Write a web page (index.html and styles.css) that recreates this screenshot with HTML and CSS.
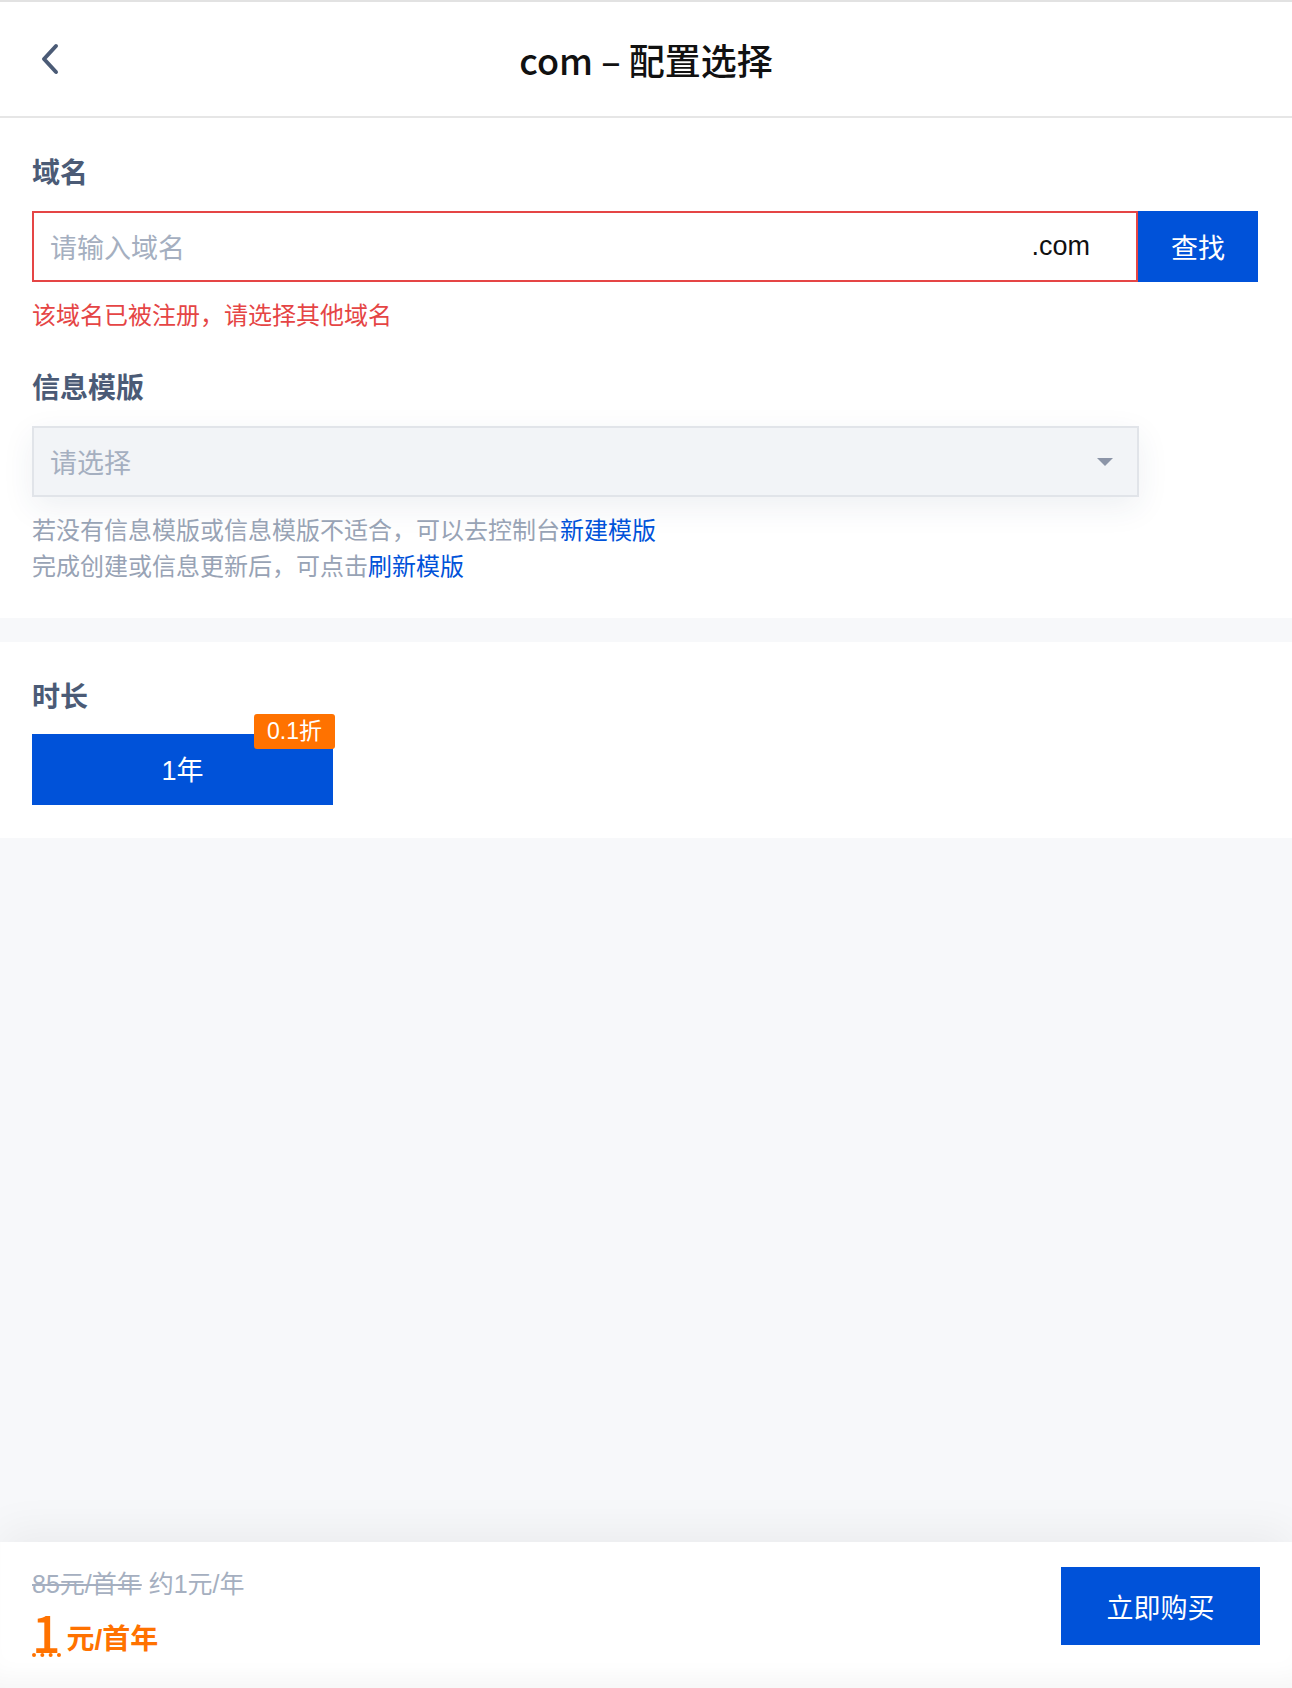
FILE: index.html
```html
<!DOCTYPE html>
<html lang="zh-CN">
<head>
    <meta charset="UTF-8">
    <meta name="viewport" content="width=device-width, initial-scale=1.0">
    <title>com - 配置选择</title>
    <link rel="stylesheet" href="styles.css">
</head>
<body>
<div class="page">

    <header class="topbar">
        <a class="back" href="#">
            <svg width="22" height="32" viewBox="0 0 22 32">
                <path d="M17 3 L5 16 L17 29" fill="none" stroke="#4b5b76" stroke-width="4" stroke-linecap="round" stroke-linejoin="round"/>
            </svg>
        </a>
        <h1 class="title">com – 配置选择</h1>
    </header>

    <!-- domain + template -->
    <section class="panel">
        <div class="label">域名</div>
        <div class="search-row">
            <div class="domain-input">
                <span class="placeholder">请输入域名</span>
                <span class="suffix">.com</span>
            </div>
            <button class="search-btn">查找</button>
        </div>
        <div class="error">该域名已被注册，请选择其他域名</div>

        <div class="label label-gap">信息模版</div>
        <div class="select">
            <span class="placeholder">请选择</span>
            <span class="caret"></span>
        </div>
        <p class="hint">
            若没有信息模版或信息模版不适合，可以去控制台<a href="#">新建模版</a><br>
            完成创建或信息更新后，可点击<a href="#">刷新模版</a>
        </p>
    </section>

    <!-- duration -->
    <section class="panel panel-second">
        <div class="label">时长</div>
        <div class="duration">
            <button class="year-btn">1年</button>
            <span class="badge">0.1折</span>
        </div>
    </section>

    <footer class="buybar">
        <div class="price">
            <div class="price-old"><s>85元/首年</s> 约1元/年</div>
            <div class="price-now"><span class="num">1</span><span class="unit">元/首年</span></div>
        </div>
        <button class="buy-btn">立即购买</button>
    </footer>

</div>
</body>
</html>
```

FILE: styles.css
```css
body {
    margin: 0;
    font-family: "Liberation Sans", "Noto Sans CJK SC", sans-serif;
    background-color: #f7f8fa;
    color: #000;
}

.page {
    display: flex;
    flex-direction: column;
    min-height: 100vh;
}

.topbar {
    display: flex;
    align-items: center;
    justify-content: center;
    position: relative;
    height: 114px;
    background: #fff;
    border-top: 2px solid #e2e2e2;
    border-bottom: 2px solid #e6e6e6;
}

.back {
    position: absolute;
    left: 39px;
    top: 41px;
    display: flex;
}

.title {
    margin: 0;
    font-family: "Noto Sans CJK SC", sans-serif;
    font-size: 36px;
    font-weight: 500;
    color: #111;
}

.panel {
    background: #fff;
    padding: 36px 34px 33px 32px;
}

.panel-second {
    margin-top: 24px;
    padding-top: 36px;
}

.label {
    font-size: 28px;
    line-height: 40px;
    font-weight: 700;
    color: #4b5b76;
}

.label-gap {
    margin-top: 36px;
}

.search-row {
    display: flex;
    margin-top: 17px;
    height: 71px;
}

.domain-input {
    flex: 1;
    display: flex;
    align-items: center;
    justify-content: space-between;
    border: 2px solid #e54545;
    padding: 0 46px 0 16px;
}

.placeholder {
    font-size: 27px;
    color: #a5afc0;
}

.suffix {
    font-size: 27px;
    color: #111;
}

.search-btn {
    width: 120px;
    border: none;
    background: #0052d9;
    color: #fff;
    font-family: inherit;
    font-size: 27px;
}

.error {
    margin-top: 17px;
    font-size: 24px;
    line-height: 34px;
    color: #e54545;
}

.select {
    display: flex;
    align-items: center;
    justify-content: space-between;
    box-sizing: border-box;
    width: 1107px;
    height: 71px;
    margin-top: 17px;
    padding: 0 24px 0 16px;
    background: #f2f4f7;
    border: 2px solid #e1e4e9;
    box-shadow: 0 10px 32px rgba(40, 60, 100, 0.08);
}

.caret {
    width: 0;
    height: 0;
    border-left: 8px solid transparent;
    border-right: 8px solid transparent;
    border-top: 8px solid #8c95a8;
}

.hint {
    margin: 16px 0 0;
    font-size: 24px;
    line-height: 36px;
    color: #98a3b5;
}

.hint a {
    color: #0052d9;
    text-decoration: none;
}

.duration {
    position: relative;
    width: 301px;
    margin-top: 16px;
}

.year-btn {
    width: 301px;
    height: 71px;
    padding-bottom: 4px;
    border: none;
    background: #0052d9;
    color: #fff;
    font-family: inherit;
    font-size: 27px;
}

.badge {
    position: absolute;
    right: -2px;
    top: -20px;
    width: 81px;
    height: 35px;
    line-height: 35px;
    text-align: center;
    border-radius: 3px;
    background: #ff7200;
    color: #fff;
    font-size: 23px;
}

.buybar {
    margin-top: auto;
    display: flex;
    justify-content: space-between;
    align-items: flex-start;
    height: 146px;
    box-sizing: border-box;
    padding: 25px 32px 0 32px;
    background: #fff;
    box-shadow: 0 -12px 40px rgba(0, 0, 0, 0.05), inset 0 -24px 24px -14px rgba(0, 0, 0, 0.04);
}

.price-old {
    font-size: 25px;
    line-height: 34px;
    color: #a5afc0;
}

.price-old s {
    text-decoration-thickness: 2px;
}

.price-now {
    display: flex;
    align-items: flex-end;
    margin-top: 8px;
    color: #ff7200;
}

.price-now .num {
    font-family: "Noto Sans CJK SC", sans-serif;
    font-size: 50px;
    font-weight: 500;
    line-height: 44px;
    border-bottom: 4px dotted #ff7200;
}

.price-now .unit {
    margin-left: 6px;
    font-size: 28px;
    font-weight: 700;
}

.buy-btn {
    width: 199px;
    height: 78px;
    border: none;
    background: #0052d9;
    color: #fff;
    font-family: inherit;
    font-size: 27px;
}
```
